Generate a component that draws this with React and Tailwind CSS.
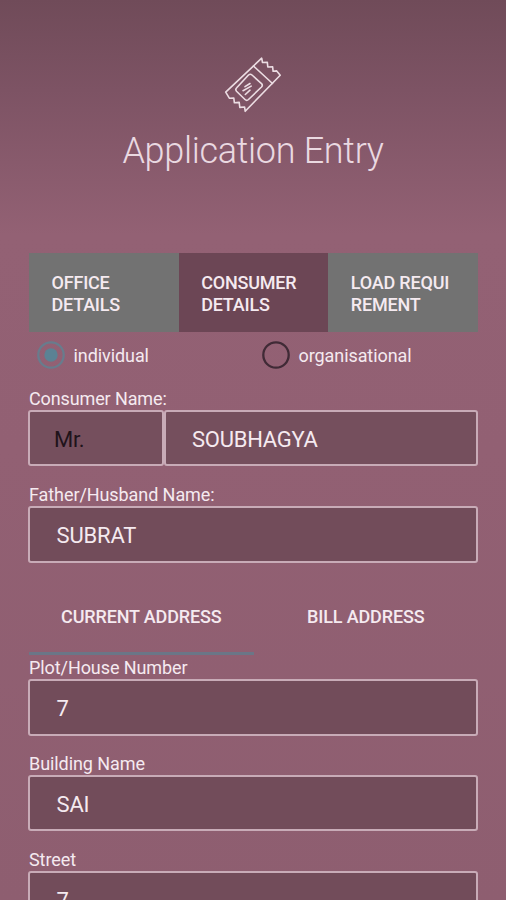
const steps = [
    { lines: ['OFFICE', 'DETAILS'], active: false },
    { lines: ['CONSUMER', 'DETAILS'], active: true },
    { lines: ['LOAD REQUI', 'REMENT'], active: false },
];

const TicketIcon = () => (
    <svg className="w-[66px] h-[66px]" viewBox="0 0 66 66" fill="none" stroke="#ecdde3" strokeWidth="1.6" strokeLinejoin="round" strokeLinecap="round">
        <path d="M5.700 40.200L41.700 6.200l.8 4.300 4.800-.3.5 4.800 4.800-.3.500 4.600 3.600-.4 3.500 4.300L25.200 59.300l-.6-4.300-4.800.4-.6-5-4.800.4-.6-4.800-4.300.3z" />
        <path d="M33.500 14l19 17.500" />
        <path d="M28.500 23q1.800-1.500 3.500 0l9.500 8.600q1.600 1.700 0 3.400L28.500 47.500q-1.800 1.600-3.500 0L16.500 39.200q-1.500-1.700.2-3.400z" />
        <path d="M25 34.700l5-3.200M23 38.700l8.200-4.600M25.300 42.500l4.700-4.300" />
    </svg>
);

const Radio = ({ label, checked }) => (
    <label className="flex w-[225px] items-center pl-[9px]">
        <svg className="h-7 w-7" viewBox="0 0 28 28" fill="none">
            <circle cx="14" cy="14" r="12.7" stroke={checked ? '#687c8d' : '#402a36'} strokeWidth="2.3" />
            {checked && <circle cx="14" cy="14" r="6.700" fill="#5b8294" />}
        </svg>
        <span className="ml-[8.500px] text-[18px] leading-[21px] tracking-[-0.08px]">{label}</span>
    </label>
);

const Field = ({ label, value, height }) => (
    <div className="mb-[18px]">
        <div className="h-[22px] pl-px text-[18px] leading-[22px] tracking-[-0.08px]">{label}</div>
        <div className={`flex items-center rounded-[3px] border-2 border-[#c8abb7] bg-[#724c5a] pl-[26.500px] pt-[2px] text-[22px] tracking-[-0.15px] ${height || 'h-[56px]'}`}>
            {value}
        </div>
    </div>
);

const App = () => {
    return (
        <div className="h-[900px] w-[506px] overflow-hidden bg-[linear-gradient(180deg,#704b59_0px,#7d5364_90px,#936174_235px,#926073_450px,#8e5e70_900px)] font-[Roboto,sans-serif] text-[#f5eaf0]">
            {/* Header */}
            <header className="flex h-[253px] flex-col items-center pt-[52px]">
                <TicketIcon />
                <h1 className="mt-[11px] text-[36px] font-light leading-[44px] tracking-[-0.3px] text-[#ead9e1]">Application Entry</h1>
            </header>

            <main className="px-[28px]">
                {/* Steps */}
                <div className="ml-px flex h-[79px]">
                    {steps.map((step) => (
                        <div
                            key={step.lines[0]}
                            className={`flex w-[150px] flex-col justify-center pl-[22.500px] pt-[2px] text-[18px] font-medium leading-[21.500px] tracking-[-0.2px] ${step.active ? 'bg-[#6c4655]' : 'bg-[#727272]'}`}
                        >
                            <span>{step.lines[0]}</span>
                            <span>{step.lines[1]}</span>
                        </div>
                    ))}
                </div>

                {/* Consumer type */}
                <div className="flex h-[56px] items-start pt-[9px]">
                    <Radio label="individual" checked />
                    <Radio label="organisational" />
                </div>

                {/* Names */}
                <div className="mb-[18px]">
                    <div className="h-[22px] pl-px text-[18px] leading-[21px] tracking-[-0.12px]">Consumer Name:</div>
                    <div className="flex h-[56px] text-[22px] tracking-[-0.25px]">
                        <div className="flex w-[136px] items-center rounded-[3px] border-2 border-[#c8abb7] bg-[#754f5d] pl-[24px] pt-[2px] text-[#20131a]">Mr.</div>
                        <div className="flex flex-1 items-center rounded-[3px] border-2 border-[#c8abb7] bg-[#754f5d] pl-[26px] pt-[2px]">SOUBHAGYA</div>
                    </div>
                </div>
                <Field label="Father/Husband Name:" value="SUBRAT" height="h-[57px]" />

                {/* Address tabs */}
                <div className="flex h-[76px] pl-px text-[18px] font-medium tracking-[-0.15px]">
                    <div className="flex h-[74px] w-[225px] items-center justify-center border-b-[3px] border-[#6b7687]">CURRENT ADDRESS</div>
                    <div className="flex h-[71px] w-[225px] items-center justify-center">BILL ADDRESS</div>
                </div>

                <Field label="Plot/House Number" value="7" height="h-[57px]" />
                <div className="-mt-px">
                    <Field label="Building Name" value="SAI" />
                </div>
                <Field label="Street" value="7" />
            </main>
        </div>
    );
};

export default App;
